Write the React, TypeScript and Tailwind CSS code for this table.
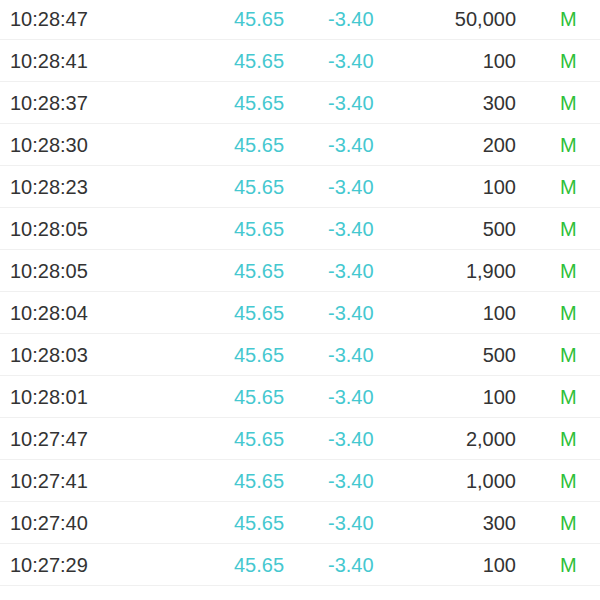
const trades = [
  { time: "10:28:47", price: "45.65", change: "-3.40", qty: "50,000" },
  { time: "10:28:41", price: "45.65", change: "-3.40", qty: "100" },
  { time: "10:28:37", price: "45.65", change: "-3.40", qty: "300" },
  { time: "10:28:30", price: "45.65", change: "-3.40", qty: "200" },
  { time: "10:28:23", price: "45.65", change: "-3.40", qty: "100" },
  { time: "10:28:05", price: "45.65", change: "-3.40", qty: "500" },
  { time: "10:28:05", price: "45.65", change: "-3.40", qty: "1,900" },
  { time: "10:28:04", price: "45.65", change: "-3.40", qty: "100" },
  { time: "10:28:03", price: "45.65", change: "-3.40", qty: "500" },
  { time: "10:28:01", price: "45.65", change: "-3.40", qty: "100" },
  { time: "10:27:47", price: "45.65", change: "-3.40", qty: "2,000" },
  { time: "10:27:41", price: "45.65", change: "-3.40", qty: "1,000" },
  { time: "10:27:40", price: "45.65", change: "-3.40", qty: "300" },
  { time: "10:27:29", price: "45.65", change: "-3.40", qty: "100" },
  { time: "10:27:27", price: "45.65", change: "-3.40", qty: "200" },
];

export default function App() {
  return (
    <div
      className="h-[600px] w-[600px] overflow-hidden bg-white"
      style={{ fontFamily: '"Liberation Sans", Arial, sans-serif' }}
    >
      <div className="-mt-[2px]">
        {trades.map((t, i) => (
          <div
            key={i}
            className="flex h-[42px] items-center border-b border-[#f0f0f0] pl-[10px] text-[20px]"
          >
            <span className="w-[224px] text-[#333333]">{t.time}</span>
            <span className="w-[94px] text-[#45c8d0]">{t.price}</span>
            <span className="w-[100px] text-[#45c8d0]">{t.change}</span>
            <span className="w-[88px] text-right text-[#333333]">{t.qty}</span>
            <span className="ml-[44px] text-[#2fbf3a]">M</span>
          </div>
        ))}
      </div>
    </div>
  );
}
